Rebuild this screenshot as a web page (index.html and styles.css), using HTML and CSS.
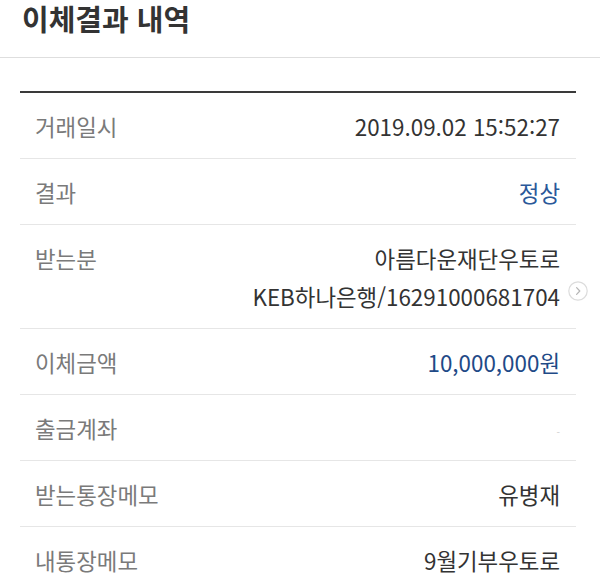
FILE: index.html
```html
<!DOCTYPE html>
<html lang="ko">
<head>
<meta charset="utf-8">
<link rel="stylesheet" href="styles.css">
</head>
<body>
<header class="top">
  <h1 class="title">이체결과 내역</h1>
</header>
<main class="detail">
  <div class="row">
    <div class="label">거래일시</div>
    <div class="value">2019.09.02 15:52:27</div>
  </div>
  <div class="row">
    <div class="label">결과</div>
    <div class="value blue">정상</div>
  </div>
  <div class="row tall">
    <div class="label">받는분</div>
    <div class="value">아름다운재단우토로<br>KEB하나은행/16291000681704</div>
    <span class="more"><svg width="20" height="20" viewBox="0 0 20 20"><circle cx="10" cy="10" r="9.2" fill="#fff" stroke="#dcdcdc" stroke-width="1.2"/><path d="M8.6 6.6 L11.8 10 L8.6 13.4" fill="none" stroke="#b5b5b5" stroke-width="1.2" stroke-linecap="round" stroke-linejoin="round"/></svg></span>
  </div>
  <div class="row">
    <div class="label">이체금액</div>
    <div class="value blue amount">10,000,000원</div>
  </div>
  <div class="row">
    <div class="label">출금계좌</div>
    <div class="value"><span class="dash">-</span></div>
  </div>
  <div class="row">
    <div class="label">받는통장메모</div>
    <div class="value">유병재</div>
  </div>
  <div class="row last">
    <div class="label">내통장메모</div>
    <div class="value">9월기부우토로</div>
  </div>
</main>
</body>
</html>
```

FILE: styles.css
```css
html, body {
  margin: 0;
  padding: 0;
  background: #ffffff;
}
body {
  font-family: "Noto Sans CJK KR", "Noto Sans", sans-serif;
  color: #333333;
  width: 600px;
  overflow: hidden;
}
.top {
  height: 57px;
  border-bottom: 1px solid #dedede;
  box-sizing: content-box;
}
.title {
  margin: 0;
  padding: 0 0 0 22px;
  font-size: 29px;
  font-weight: 700;
  line-height: 36px;
  color: #333333;
  letter-spacing: 0;
}
.detail {
  margin: 33px 24px 0 20px;
  border-top: 2px solid #3a3a3a;
}
.row {
  position: relative;
  display: flex;
  justify-content: space-between;
  align-items: flex-start;
  height: 38px;
  padding: 14px 16px 13px 15px;
  border-bottom: 1px solid #e6e6e6;
  font-size: 22.4px;
  line-height: 38px;
}
.row.tall {
  height: 76px;
}
.row.last {
  border-bottom: none;
}
.label {
  color: #7a7a7a;
  white-space: nowrap;
}
.value {
  text-align: right;
  color: #333333;
  white-space: nowrap;
}
.blue {
  color: #2a5899;
}
.amount {
  color: #1f4a87;
}
.dash {
  display: inline-block;
  color: #cfcfcf;
  font-size: 10px;
  line-height: 10px;
  vertical-align: middle;
}
.more {
  position: absolute;
  right: -12px;
  top: 56px;
  width: 20px;
  height: 20px;
  line-height: 0;
}
```
